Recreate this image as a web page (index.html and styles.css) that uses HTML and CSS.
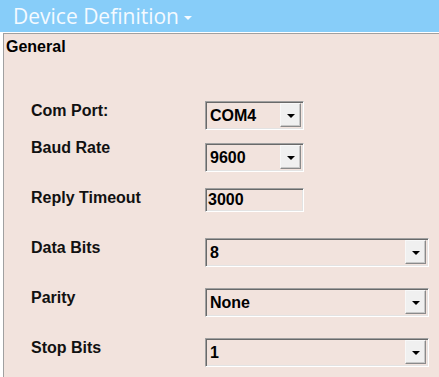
FILE: index.html
```html
<!DOCTYPE html>
<html>
<head>
<meta charset="utf-8">
<title>Device Definition</title>
<link rel="stylesheet" href="styles.css">
</head>
<body>
<div class="header">
  <span class="title">Device Definition</span>
  <span class="caret"></span>
</div>
<div class="panel">
  <div class="group-title">General</div>
  <div class="rows">
    <div class="row r1">
      <span class="label">Com Port:</span>
      <div class="combo short"><span class="value">COM4</span><span class="btn"><i class="tri"></i></span></div>
    </div>
    <div class="row r2">
      <span class="label up">Baud Rate</span>
      <div class="combo short"><span class="value">9600</span><span class="btn"><i class="tri"></i></span></div>
    </div>
    <div class="row r3">
      <span class="label">Reply Timeout</span>
      <div class="field"><span class="value">3000</span></div>
    </div>
    <div class="row r4">
      <span class="label">Data Bits</span>
      <div class="combo wide"><span class="value">8</span><span class="btn"><i class="tri"></i></span></div>
    </div>
    <div class="row r5">
      <span class="label">Parity</span>
      <div class="combo wide"><span class="value">None</span><span class="btn"><i class="tri"></i></span></div>
    </div>
    <div class="row r6">
      <span class="label">Stop Bits</span>
      <div class="combo wide"><span class="value">1</span><span class="btn"><i class="tri"></i></span></div>
    </div>
  </div>
</div>
</body>
</html>
```
FILE: styles.css
```css
html, body {
  margin: 0;
  padding: 0;
  background: #ffffff;
  overflow: hidden;
}
body {
  width: 439px;
  height: 377px;
  font-family: "Liberation Sans", Arial, sans-serif;
}
.header {
  height: 32px;
  background: #87cdf9;
  display: flex;
  align-items: center;
  padding-left: 13px;
  box-sizing: border-box;
}
.title {
  font-family: "Open Sans", "Noto Sans", sans-serif;
  font-size: 21px;
  color: #f4faff;
  line-height: 32px;
}
.caret {
  width: 0;
  height: 0;
  border-left: 4px solid transparent;
  border-right: 4px solid transparent;
  border-top: 4px solid #f4faff;
  margin-left: 5px;
  margin-top: 3px;
}
.panel {
  margin-top: 1px;
  margin-left: 3px;
  height: 344px;
  background: #f2e3dd;
  border-top: 1px solid #a0a0a0;
  border-left: 1px solid #a0a0a0;
  padding-left: 2px;
  padding-top: 4px;
  box-sizing: border-box;
}
.group-title {
  font-weight: bold;
  font-size: 16px;
  line-height: 18px;
  color: #000;
}
.rows {
  margin-top: 45px;
  padding-left: 25px;
  display: flex;
  flex-direction: column;
}
.row {
  display: flex;
  align-items: flex-start;
}
.r1 { height: 42px; }
.r2 { height: 45px; }
.r3 { height: 50px; }
.r4 { height: 50px; }
.r5 { height: 50px; }
.r6 { height: 40px; }
.label {
  width: 174px;
  flex: none;
  font-weight: bold;
  font-size: 16px;
  line-height: 18px;
  margin-top: 1px;
  color: #111;
}
.label.up { margin-top: -4px; }
.combo, .field {
  box-sizing: border-box;
  border: 1px solid;
  border-color: #a0a0a0 #ffffff #ffffff #a0a0a0;
  box-shadow: inset 1px 1px 0 #696969, inset -1px -1px 0 #e3e3e3;
  background: #f2e3dd;
  display: flex;
  align-items: center;
  padding: 2px;
}
.combo { height: 29px; }
.combo.short { width: 99px; }
.combo.wide { width: 224px; }
.field {
  width: 99px;
  height: 24px;
  padding-left: 2px;
}
.value {
  flex: 1;
  font-weight: bold;
  font-size: 16px;
  line-height: 18px;
  color: #000;
  padding-left: 2px;
}
.field .value { padding-left: 0; }
.btn {
  width: 21px;
  height: 24px;
  box-sizing: border-box;
  background: #f0f0f0;
  border: 1px solid;
  border-color: #f8f8f8 #8a8a8a #8a8a8a #f8f8f8;
  box-shadow: inset -1px -1px 0 #c8c8c8;
  display: flex;
  align-items: center;
  justify-content: center;
  margin-top: -1px;
}
.tri {
  width: 0;
  height: 0;
  border-left: 4px solid transparent;
  border-right: 4px solid transparent;
  border-top: 4px solid #000;
  margin-top: 1px;
}
```
